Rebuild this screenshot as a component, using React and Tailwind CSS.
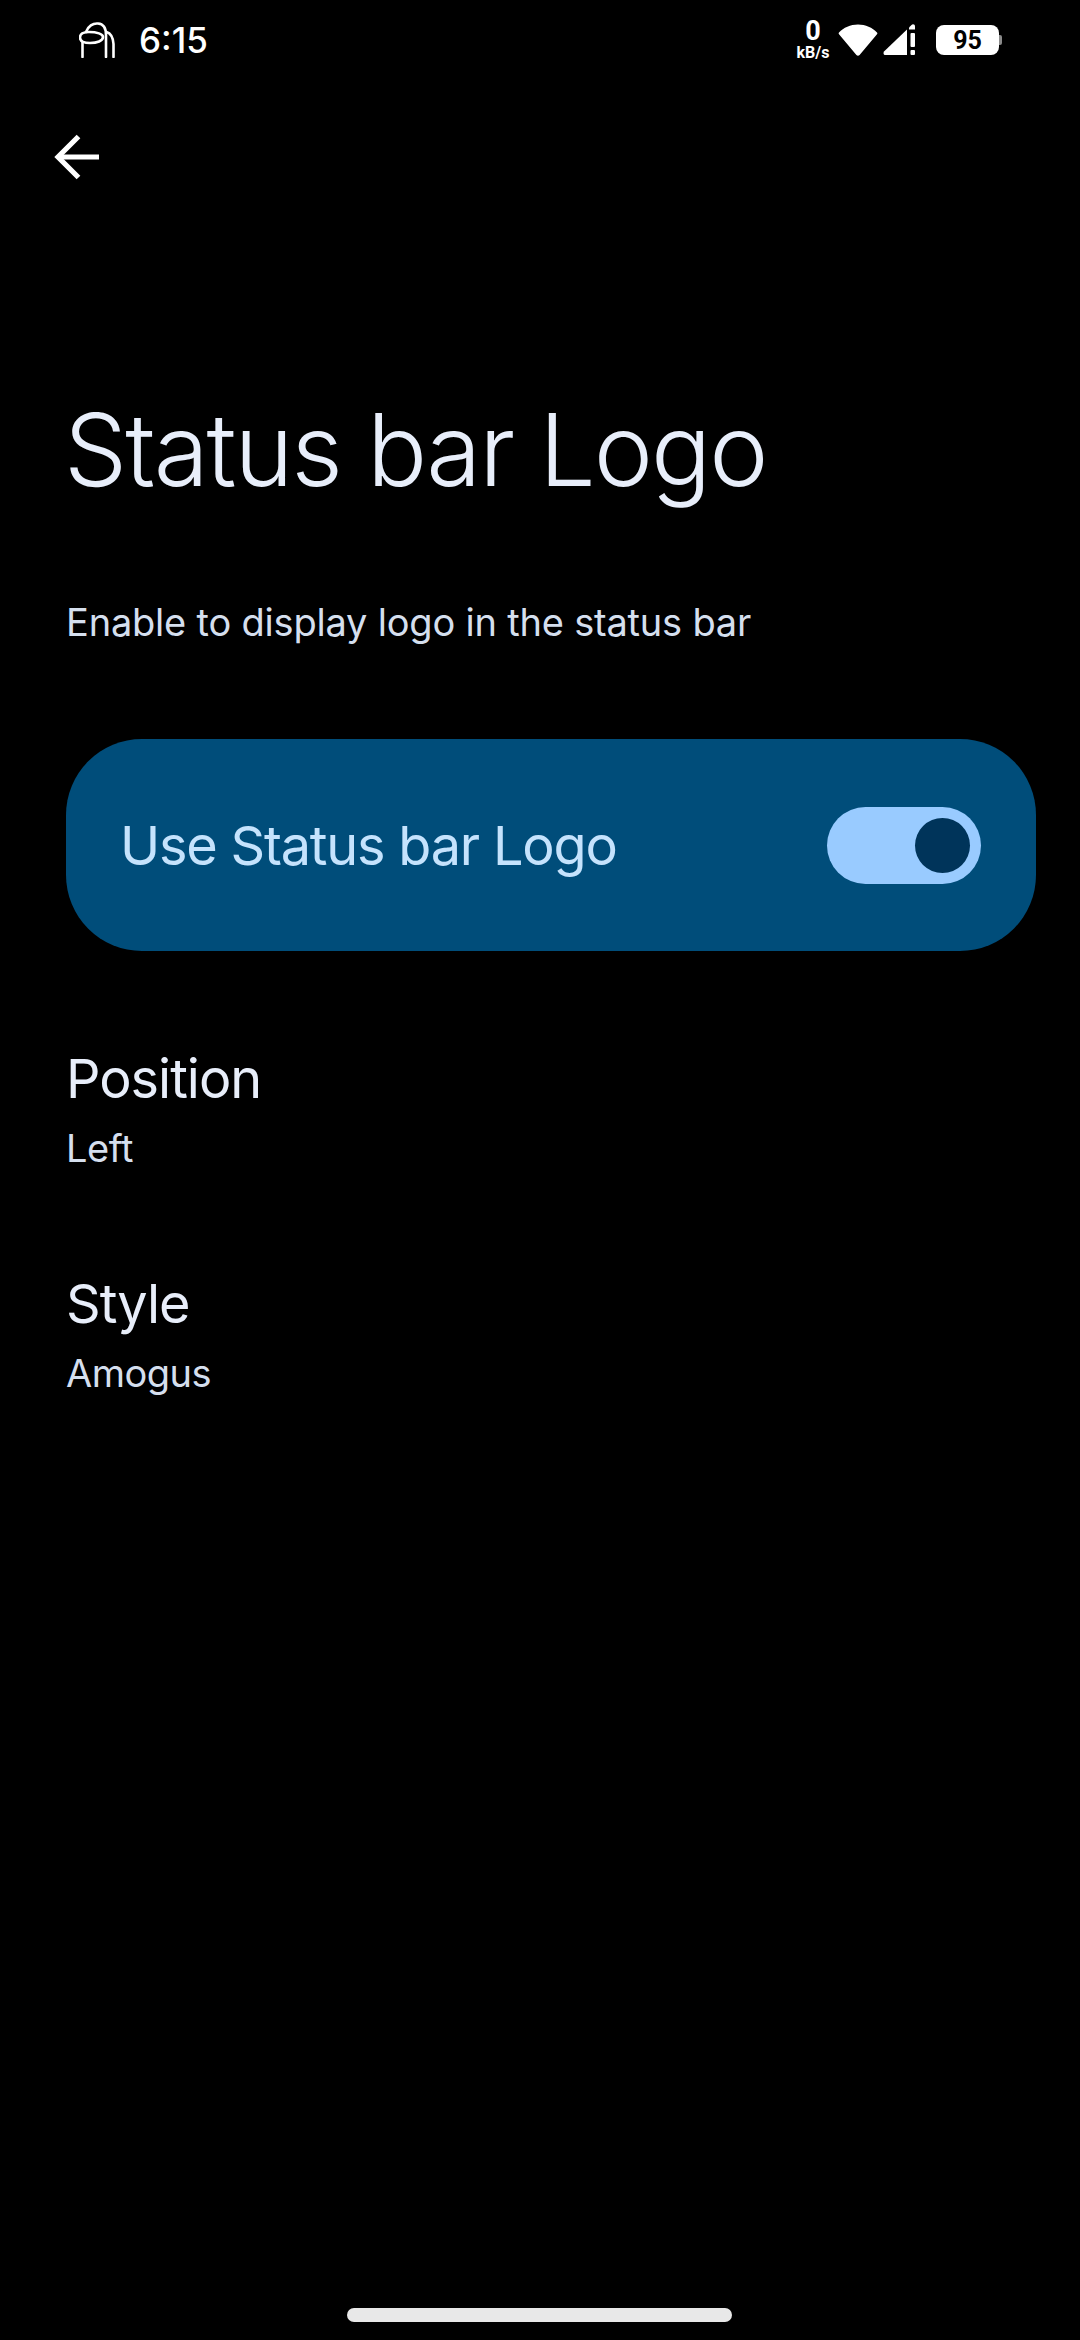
import React from 'react';

const sans = { fontFamily: 'Inter, "Noto Sans", sans-serif' };

function AmongUs() {
  return (
    <svg width="36" height="36" viewBox="0 0 36 36" fill="none" stroke="#ffffff" strokeWidth="2.6" strokeLinecap="round" strokeLinejoin="round">
      <path d="M3.5 35V20" />
      <path d="M7 10C9 4 14 1 19 1.5C25 2 27 7 27 13V35" />
      <path d="M27.5 10C31 11 34 15 34.5 22V35" />
      <path d="M10 10C4 10 1 12 1 15.5C1 19 5 21 11 21C18 21 24 19 24 15C24 12 18 10 10 10Z" />
    </svg>
  );
}

function BackArrow() {
  return (
    <svg width="46" height="46" viewBox="0 0 46 46" fill="none" stroke="#ffffff" strokeWidth="5.2">
      <path d="M45 23H5" />
      <path d="M24.5 2.5L4 23L24.5 43.5" />
    </svg>
  );
}

function StatusIcons() {
  return (
    <div className="flex items-center">
      <div className="w-[36px] flex flex-col items-center text-white font-bold" style={{ fontFamily: 'Roboto, sans-serif' }}>
        <span className="text-[27px] leading-[22px]">0</span>
        <span className="text-[16px] leading-[15px] mt-[3px]">kB/s</span>
      </div>
      <svg className="ml-[7px]" width="40" height="32" viewBox="0 0 40 32" fill="#ffffff">
        <path d="M1 8.5C5.5 3.5 12.5 0.5 20 0.5C27.5 0.5 34.5 3.5 39 8.5C39.5 9 39.5 9.7 39 10.2L21.6 31C20.7 32 19.3 32 18.4 31L1 10.2C0.5 9.7 0.5 9 1 8.5Z" />
      </svg>
      <svg className="ml-[5px]" width="34" height="34" viewBox="0 0 34 34" fill="#ffffff">
        <path d="M1 28.5L24 6.5V32H2C0.5 32 0 30 1 28.5Z" />
        <path d="M26 4.5L28.5 2C30 0.5 32 1.5 32 3.5V6.5H26Z" />
        <rect x="27.5" y="10" width="4.5" height="14" rx="1" />
        <rect x="27.5" y="27" width="4.5" height="5" rx="1" />
      </svg>
      <div className="ml-[19px] flex items-center">
        <div className="w-[63px] h-[30px] rounded-[8px] bg-white flex items-center justify-center text-black font-bold text-[25px] leading-none" style={{ fontFamily: 'Roboto, sans-serif' }}>
          95
        </div>
        <div className="w-[3px] h-[10px] rounded-r-[2px] bg-[#8a8a8a]" />
      </div>
    </div>
  );
}

function SettingRow({ title, value, className }) {
  return (
    <div className={className}>
      <div className="text-[54px] leading-[64px] tracking-[-1px] text-[#e8eefa]">{title}</div>
      <div className="text-[38px] leading-[50px] mt-[12px] tracking-[-0.5px] text-[#d5dfee]">{value}</div>
    </div>
  );
}

export default function App() {
  return (
    <div className="w-[1080px] h-[2340px] bg-black flex flex-col relative overflow-hidden" style={sans}>
      {/* Status bar */}
      <div className="flex items-center justify-between pl-[79px] pr-[78px] pt-[20px] h-[60px]">
        <div className="flex items-center">
          <AmongUs />
          <span className="ml-[24px] text-[35px] leading-none font-medium text-white">6:15</span>
        </div>
        <StatusIcons />
      </div>

      {/* App bar */}
      <div className="pl-[54px] mt-[74px]">
        <BackArrow />
      </div>

      <div className="pl-[66px]">
        <h1 className="mt-[210px] -ml-[2px] text-[100px] leading-[120px] font-light tracking-[-2px] text-[#e8eefa]">Status bar Logo</h1>
        <p className="mt-[87px] text-[38px] leading-[50px] tracking-[-0.2px] text-[#d5dfee]">Enable to display logo in the status bar</p>
      </div>

      {/* Main switch */}
      <div className="mt-[92px] ml-[66px] w-[970px] h-[212px] rounded-[76px] bg-[#004d7a] flex items-center justify-between pl-[54px] pr-[55px]">
        <span className="text-[54px] tracking-[-1.2px] text-[#c5e3fd]">Use Status bar Logo</span>
        <div className="w-[154px] h-[77px] rounded-full bg-[#99cbff] flex items-center justify-end pr-[11px]">
          <div className="w-[55px] h-[55px] rounded-full bg-[#00345a]" />
        </div>
      </div>

      <div className="pl-[66px] pt-[96px]">
        <SettingRow title="Position" value="Left" />
        <SettingRow className="mt-[99px]" title="Style" value="Amogus" />
      </div>

      {/* Gesture pill */}
      <div className="absolute bottom-[18px] left-[347px] w-[385px] h-[14px] rounded-full bg-[#e8e8e8]" />
    </div>
  );
}
